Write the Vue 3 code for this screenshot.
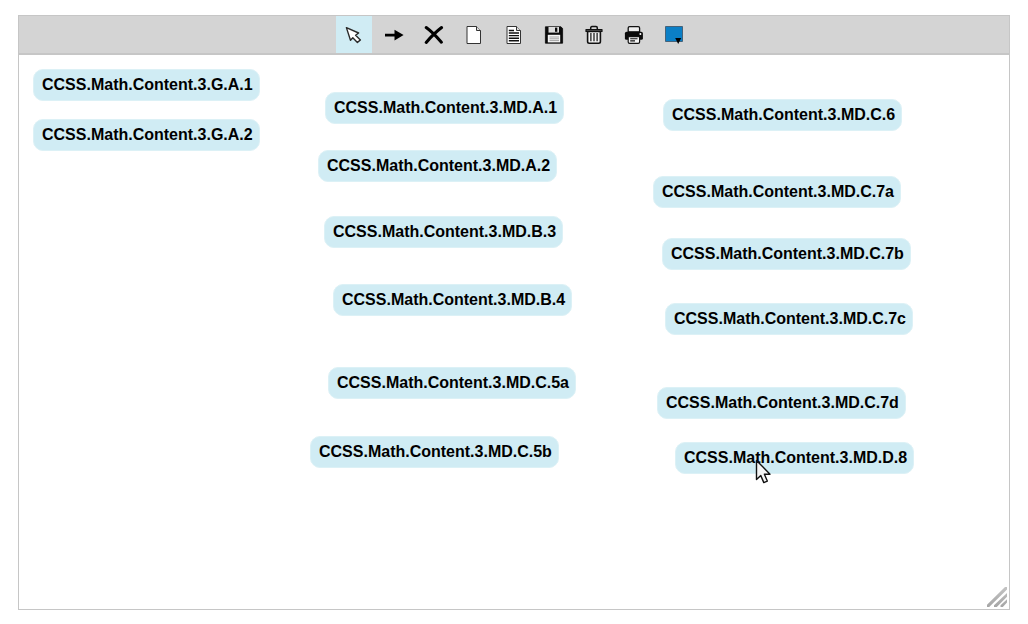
<script setup>
import { ref } from 'vue'

const active = ref('select')

const nodes = [
  { label: 'CCSS.Math.Content.3.G.A.1', x: 14, y: 14 },
  { label: 'CCSS.Math.Content.3.G.A.2', x: 14, y: 64 },
  { label: 'CCSS.Math.Content.3.MD.A.1', x: 306, y: 37 },
  { label: 'CCSS.Math.Content.3.MD.A.2', x: 299, y: 95 },
  { label: 'CCSS.Math.Content.3.MD.B.3', x: 305, y: 161 },
  { label: 'CCSS.Math.Content.3.MD.B.4', x: 314, y: 229 },
  { label: 'CCSS.Math.Content.3.MD.C.5a', x: 309, y: 312 },
  { label: 'CCSS.Math.Content.3.MD.C.5b', x: 291, y: 381 },
  { label: 'CCSS.Math.Content.3.MD.C.6', x: 644, y: 44 },
  { label: 'CCSS.Math.Content.3.MD.C.7a', x: 634, y: 121 },
  { label: 'CCSS.Math.Content.3.MD.C.7b', x: 643, y: 183 },
  { label: 'CCSS.Math.Content.3.MD.C.7c', x: 646, y: 248 },
  { label: 'CCSS.Math.Content.3.MD.C.7d', x: 638, y: 332 },
  { label: 'CCSS.Math.Content.3.MD.D.8', x: 656, y: 387 },
]
</script>

<template>
  <main class="page">
    <section class="editor">
      <div class="toolbar" role="toolbar" aria-label="Diagram tools">
        <button type="button" class="tool" :class="{ active: active === 'select' }" aria-label="Select" @click="active = 'select'">
          <svg viewBox="0 0 20 20">
            <path d="M2.4 2.6 L14.6 8 L11.6 10.3 L16.4 14.9 L13.4 17.5 L8.8 12.7 L6.5 15.2 Z" fill="#fff" stroke="#2a2a2a" stroke-width="1.4" stroke-linejoin="round" />
          </svg>
        </button>
        <button type="button" class="tool" :class="{ active: active === 'arrow' }" aria-label="Arrow" @click="active = 'arrow'">
          <svg viewBox="0 0 20 20">
            <path d="M1 8.8 H10.5 V4.8 L19.6 10 L10.5 15.4 V11.6 H1 Z" fill="#000" />
          </svg>
        </button>
        <button type="button" class="tool" aria-label="Delete">
          <svg viewBox="0 0 20 20">
            <path d="M2.2 2.6 C7 6 13 12.2 17.4 17.2 M17.6 2.6 C12.5 6.5 6.5 12.5 2.2 17.4" fill="none" stroke="#000" stroke-width="3.1" stroke-linecap="round" />
          </svg>
        </button>
        <button type="button" class="tool" aria-label="New page">
          <svg viewBox="0 0 20 20">
            <path d="M3 1.5 H12.5 L16.5 5.5 V18.5 H3 Z" fill="#fff" stroke="#333" />
            <path d="M12.5 1.5 V5.5 H16.5" fill="#ddd" stroke="#333" />
          </svg>
        </button>
        <button type="button" class="tool" aria-label="Open document">
          <svg viewBox="0 0 20 20">
            <path d="M3 1.5 H12.5 L16.5 5.5 V18.5 H3 Z" fill="#fff" stroke="#333" />
            <path d="M12.5 1.5 V5.5 H16.5" fill="#ddd" stroke="#333" />
            <path d="M4.8 5.5 H10 M4.8 8 H15 M4.8 10.6 H15 M4.8 13.2 H15 M4.8 15.8 H15" stroke="#111" stroke-width="1.4" />
          </svg>
        </button>
        <button type="button" class="tool" aria-label="Save">
          <svg viewBox="0 0 20 20">
            <path d="M1.4 1.8 H17 L18.6 3.6 V18.2 H1.4 Z" fill="#0a0a0a" stroke="#0a0a0a" stroke-width="0.8" stroke-linejoin="round" />
            <path d="M4.5 2 H15 V7.6 H4.5 Z" fill="#ddd" />
            <path d="M11 2.6 H13.3 V6.8 H11 Z" fill="#0a0a0a" />
            <path d="M3.8 9.8 H16.2 V17.4 H3.8 Z" fill="#f5f5f5" />
            <path d="M5.5 12 H15 M5.5 13.8 H15 M5.5 15.6 H15" stroke="#999" stroke-width="0.9" />
          </svg>
        </button>
        <button type="button" class="tool" aria-label="Clear all">
          <svg viewBox="0 0 20 20">
            <path d="M3.6 6.5 H16.4 V16.5 Q16.4 18.2 14.7 18.2 H5.3 Q3.6 18.2 3.6 16.5 Z" fill="#f2f2f2" stroke="#111" stroke-width="1.6" />
            <path d="M2 4.5 H18 V6.4 H2 Z" fill="#555" stroke="#111" stroke-width="1.2" stroke-linejoin="round" />
            <path d="M6.7 4.4 V3 Q6.7 1.6 8 1.6 H12 Q13.3 1.6 13.3 3 V4.4" fill="none" stroke="#111" stroke-width="1.5" />
            <path d="M6.9 8 V16.2 M10 8 V16.2 M13.1 8 V16.2" stroke="#111" stroke-width="1.2" />
          </svg>
        </button>
        <button type="button" class="tool" aria-label="Print">
          <svg viewBox="0 0 20 20">
            <path d="M4.2 7 V3 Q4.2 1.6 5.6 1.6 H14.2 Q15.6 1.6 15.6 3 V7 Z" fill="#eee" stroke="#111" stroke-width="1.3" />
            <path d="M2.6 6.8 H17.2 Q18.9 6.8 18.9 8.4 V13.4 Q18.9 14.8 17.4 14.8 H2.4 Q0.9 14.8 0.9 13.4 V8.4 Q0.9 6.8 2.6 6.8 Z" fill="#0a0a0a" />
            <circle cx="16.4" cy="8.9" r="1" fill="#fff" />
            <path d="M4.2 11.6 H15.6 V17 Q15.6 18.4 14.2 18.4 H5.6 Q4.2 18.4 4.2 17 Z" fill="#f5f5f5" stroke="#111" stroke-width="1.2" />
            <path d="M6.2 13.7 H13.5 M6.2 15.9 H11" stroke="#111" stroke-width="1.1" />
          </svg>
        </button>
        <button type="button" class="tool" aria-label="Choose colour">
          <svg viewBox="0 0 20 20">
            <path d="M1.5 1.5 H18.5 V16.5 H1.5 Z" fill="#0b7fc6" stroke="#45637a" />
            <path d="M11.2 13 H17.2 L14.2 19 Z" fill="#000" />
          </svg>
        </button>
      </div>

      <div class="canvas">
        <div v-for="node in nodes" :key="node.label" class="node" :style="{ left: node.x + 'px', top: node.y + 'px' }">
          {{ node.label }}
        </div>
        <svg class="pointer" viewBox="0 0 16 25" aria-hidden="true">
          <path d="M1.5 1.5 V20.6 L5.8 16.6 L8.8 23.6 L12.3 22.1 L9.4 15.2 H15 Z" fill="#f5f5f5" stroke="#111" stroke-width="1.4" stroke-linejoin="round" />
        </svg>
        <svg class="grip" viewBox="0 0 20 20" aria-hidden="true">
          <defs>
            <linearGradient id="gripShade" gradientUnits="userSpaceOnUse" x1="0" y1="0" x2="0" y2="20">
              <stop offset="0" stop-color="#c4c4c4" />
              <stop offset="1" stop-color="#a6a6a6" />
            </linearGradient>
          </defs>
          <path d="M0 17.8 L18 0 H20 V2.4 L2.2 20 H0 Z M7 18.2 L20 6 V9.8 L9.8 20 H7 Z M13.5 18.2 L20 12.2 V15.6 L15.8 20 H13.5 Z" fill="url(#gripShade)" />
        </svg>
      </div>
    </section>
  </main>
</template>

<style>
body {
  margin: 0;
  background: #fff;
}
</style>

<style scoped>
.page {
  box-sizing: border-box;
  display: flex;
  min-height: 100vh;
  padding: 15px 18px 14px;
  font-family: "Liberation Sans", Arial, sans-serif;
}

.editor {
  flex: 1;
  display: flex;
  flex-direction: column;
  border: 1px solid #c6c6c6;
}

.toolbar {
  display: flex;
  justify-content: center;
  gap: 4px;
  background: #d4d4d4;
  border-bottom: 2px solid #c6c6c6;
}

.tool {
  display: flex;
  align-items: center;
  justify-content: center;
  width: 36px;
  height: 37px;
  padding: 0;
  border: 0;
  background: transparent;
}

.tool.active {
  background: #d0ecf4;
}

.tool svg {
  width: 20px;
  height: 20px;
}

.canvas {
  position: relative;
  flex: 1;
}

.node {
  position: absolute;
  padding: 6px 6px 6px 8px;
  border: 1px solid #dcf1f6;
  border-radius: 10px;
  background: #d0ecf4;
  color: #000;
  font-size: 16px;
  font-weight: bold;
  line-height: 18px;
  white-space: nowrap;
}

.pointer {
  position: absolute;
  left: 736px;
  top: 404px;
  width: 16px;
  height: 25px;
}

.grip {
  position: absolute;
  right: 2px;
  bottom: 2px;
  width: 20px;
  height: 20px;
}
</style>
